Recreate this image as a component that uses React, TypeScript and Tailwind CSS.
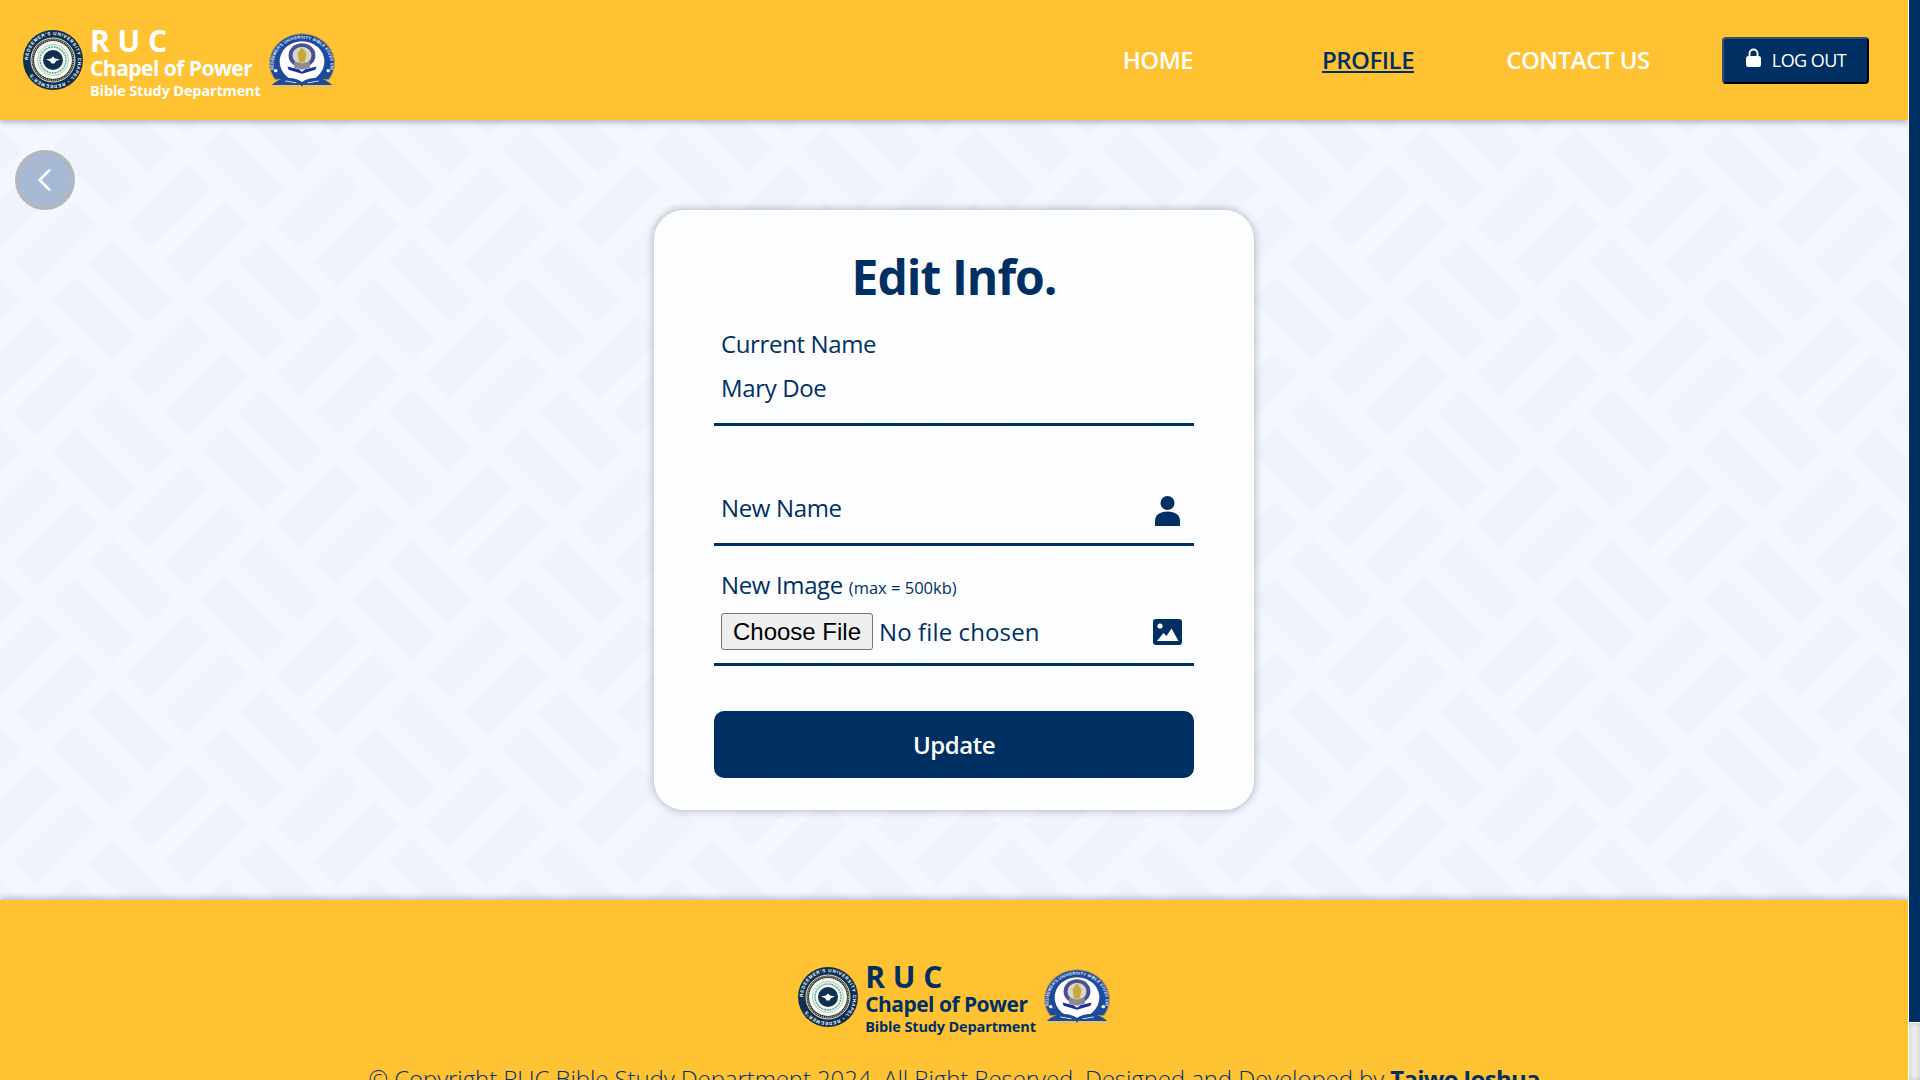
import React from 'react'

function ChapelSeal({ id, className }: { id: string; className: string }) {
    return (
        <svg viewBox="0 0 60 60" className={className}>
            <defs>
                <path id={id} d="M30 30 m-25 0 a25 25 0 1 1 50 0 a25 25 0 1 1 -50 0" />
            </defs>
            <circle cx="30" cy="30" r="30" fill="#11304f" />
            <text fontSize="4.6" fontWeight="700" fill="#fff" fontFamily="'Liberation Sans', sans-serif" letterSpacing="0.7">
                <textPath href={`#${id}`}>REDEEMER'S UNIVERSITY CHAPEL • REDEEMER'S</textPath>
            </text>
            <circle cx="30" cy="30" r="22" fill="none" stroke="#fff" strokeWidth="0.9" />
            <circle cx="30" cy="30" r="20.4" fill="none" stroke="#e8b93a" strokeWidth="1.5" strokeDasharray="1 1" />
            <circle cx="30" cy="30" r="19" fill="#f6f7f2" />
            <circle cx="30" cy="30" r="15.5" fill="none" stroke="#b9c3cb" strokeWidth="1" />
            <circle cx="30" cy="30" r="13" fill="none" stroke="#46b27a" strokeWidth="1.4" strokeDasharray="2 0.8" />
            <circle cx="30" cy="30" r="10" fill="#11304f" />
            <path d="M23 29.5 L28 28.6 L30 26.6 L32 28.6 L37 29.5 L33 31 L31.5 33.4 L28.5 33.4 L27 31 Z" fill="#fff" />
        </svg>
    )
}

function BibleSeal({ id, className }: { id: string; className: string }) {
    return (
        <svg viewBox="3.5 0 59 56" preserveAspectRatio="none" className={className}>
            <defs>
                <path id={id} d="M8 37 A25.5 25.5 0 1 1 58 37" />
            </defs>
            <path d="M9 47 A29 29 0 1 1 57 47 Z" fill="#1d4a9c" stroke="#c99f3a" strokeWidth="1" />
            <text fontSize="3.9" fontWeight="700" fill="#e6ecf7" fontFamily="'Liberation Sans', sans-serif" letterSpacing="0.15">
                <textPath href={`#${id}`}>REDEEMER'S UNIVERSITY BIBLE STUDY UNIT</textPath>
            </text>
            <circle cx="33" cy="29" r="20" fill="#fff" />
            <circle cx="9.5" cy="38" r="1.6" fill="#fff" />
            <circle cx="56.5" cy="38" r="1.6" fill="#fff" />
            <circle cx="33" cy="23" r="12" fill="#4a4f95" />
            <circle cx="33" cy="23" r="8.5" fill="#d8d6c4" />
            <path d="M33 15 L37 21 L35.5 30 L30.5 30 L29 21 Z" fill="#c9a73f" />
            <path d="M26 29 L33 31 L40 29 L40 35 L33 37 L26 35 Z" fill="#8f8a8d" />
            <path d="M20 34 L30 36.5 L33 39 L36 36.5 L46 34 L45 37 L33 41 L21 37 Z" fill="#1d2f9c" />
            <path d="M6 52 C15 43 26 44 33 49 C40 44 51 43 60 52 L34 52 L33 54 L32 52 Z" fill="#1d4a9c" />
            <path d="M4 53.5 L31 53.5 L33 55.5 L35 53.5 L62 53.5 L60 55 L6 55 Z" fill="#d9c27a" />
            <path d="M18 48 L28 50 M48 48 L38 50" stroke="#fff" strokeWidth="0.9" />
        </svg>
    )
}

function Brand({ color, prefix }: { color: string; prefix: string }) {
    return (
        <div className="flex items-center">
            <ChapelSeal id={`${prefix}-chapel`} className="w-[60px] h-[60px] shrink-0" />
            <div className={`flex flex-col ml-[7px] mt-[7px] font-bold font-['Open_Sans',sans-serif] ${color}`}>
                <span className="text-[30px] leading-[28px] tracking-normal whitespace-pre">R U C</span>
                <span className="text-[21px] leading-[26px] tracking-[-0.025em]">Chapel of Power</span>
                <span className="text-[14.5px] leading-[20px] tracking-[-0.01em]">Bible Study Department</span>
            </div>
            <BibleSeal id={`${prefix}-bible`} className="w-[66px] h-[57px] ml-[8px] shrink-0" />
        </div>
    )
}

function WeavePattern() {
    return (
        <svg className="absolute inset-0 w-full h-full">
            <defs>
                <pattern id="weave" width="150" height="150" patternUnits="userSpaceOnUse">
                    <g fill="#eff3fb">
                        <polygon points="51.7,30 75,6.7 135.7,67.7 112.3,90.7" />
                        <polygon points="88.3,-7.7 112.3,-31 172.7,30 149.3,53.3" />
                        <polygon points="88.3,142.3 112.3,119 172.7,180 149.3,203.3" />
                        <polygon points="-61.7,-7.7 -37.7,-31 22.7,30 -0.7,53.3" />
                        <polygon points="-61.7,142.3 -37.7,119 22.7,180 -0.7,203.3" />
                        <polygon points="126,105 186.7,44 210.7,67.7 149.3,128.3" />
                        <polygon points="-24,105 36.7,44 60.7,67.7 -0.7,128.3" />
                        <polygon points="164,142.3 225,81.7 248.3,105 186.7,165.7" />
                        <polygon points="14,142.3 75,81.7 98.3,105 36.7,165.7" />
                        <polygon points="164,-7.7 225,-68.3 248.3,-45 186.7,15.7" />
                        <polygon points="14,-7.7 75,-68.3 98.3,-45 36.7,15.7" />
                    </g>
                </pattern>
            </defs>
            <rect width="100%" height="100%" fill="url(#weave)" />
        </svg>
    )
}

function App() {
    const fieldText = "text-[24px] leading-[32px] tracking-[-0.015em] text-[#003063]"

    return (
        <div className="h-screen overflow-hidden flex font-['Open_Sans',sans-serif] bg-white">
            <div className="flex-1 min-w-0 h-[1141px]">
                <header className="relative z-10 h-[120px] bg-[#ffc233] flex items-center justify-between pl-[23px] pr-[39px] shadow-[0_2px_6px_rgba(0,48,99,0.35)]">
                    <Brand color="text-white" prefix="top" />
                    <nav className="flex items-center">
                        <a className="w-[210px] text-center text-[24px] font-semibold tracking-[-0.02em] text-white">HOME</a>
                        <a className="w-[210px] text-center text-[24px] font-semibold tracking-[-0.02em] text-[#003063] underline">PROFILE</a>
                        <a className="w-[210px] text-center text-[24px] font-semibold tracking-[-0.02em] text-white">CONTACT US</a>
                        <button className="ml-[39px] w-[147px] h-[47px] flex items-center justify-center gap-[10px] bg-[#003063] text-white text-[18px] tracking-[-0.03em] rounded-[4px] border-2 border-t-[#33506f] border-l-[#33506f] border-r-black border-b-black">
                            <svg viewBox="0 0 17 19" className="w-[17px] h-[19px] -mt-[5px]">
                                <path d="M4.5 9 V5.5 A4 4 0 0 1 12.5 5.5 V9" fill="none" stroke="#fff" strokeWidth="1.8" />
                                <rect x="1" y="8" width="15" height="11" rx="2.5" fill="#fff" />
                            </svg>
                            LOG OUT
                        </button>
                    </nav>
                </header>

                <main className="relative h-[780px] bg-[#f3f7ff] flex items-center justify-center">
                    <WeavePattern />
                    <button className="absolute left-[15px] top-[30px] w-[60px] h-[60px] rounded-full bg-[#a8bad3] border-[3px] border-[#b4b6ba] flex items-center justify-center">
                        <svg viewBox="0 0 16 26" className="w-[14px] h-[24px] -ml-[3px]" fill="none" stroke="#fff" strokeWidth="3" strokeLinecap="round" strokeLinejoin="round">
                            <path d="M14 2 L3 13 L14 24" />
                        </svg>
                    </button>

                    <div className="relative w-[600px] h-[600px] rounded-[30px] bg-white/80 shadow-[0_0_10px_rgba(0,0,0,0.3)] px-[60px] pt-[35px]">
                        <h1 className="text-[48px] leading-[64px] font-bold tracking-[-0.02em] text-center text-[#003063]">Edit Info.</h1>

                        <div className="h-[117px] pt-[19px] border-b-[3px] border-[#003063] px-[7px]">
                            <p className={fieldText}>Current Name</p>
                            <p className={`${fieldText} mt-[12px]`}>Mary Doe</p>
                        </div>

                        <div className="h-[120px] border-b-[3px] border-[#003063] pl-[7px] pr-[14px] flex items-end justify-between pb-[19px]">
                            <span className={fieldText}>New Name</span>
                            <svg viewBox="0 0 25 30" className="w-[25px] h-[30px] -mb-[2px]" fill="#003063">
                                <circle cx="12.5" cy="7" r="7" />
                                <path d="M0 30 V25 C0 19 5 15.5 12.5 15.5 C20 15.5 25 19 25 25 V30 Z" />
                            </svg>
                        </div>

                        <div className="h-[120px] border-b-[3px] border-[#003063] pl-[7px] pr-[12px] pt-[23px]">
                            <p className={fieldText}>
                                New Image <span className="text-[16.5px] tracking-normal">(max = 500kb)</span>
                            </p>
                            <div className="flex items-center justify-between mt-[9px]">
                                <div className="flex items-center">
                                    <button className="w-[152px] h-[37px] bg-[#efefef] border border-[#767676] rounded-[3px] text-black text-[24px] font-['Liberation_Sans',sans-serif]">Choose File</button>
                                    <span className="ml-[6px] text-[24px] leading-[32px] tracking-[0.005em] text-[#003063]">No file chosen</span>
                                </div>
                                <svg viewBox="0 0 29 26" className="w-[29px] h-[26px]">
                                    <rect width="29" height="26" rx="3" fill="#003063" />
                                    <circle cx="7" cy="7" r="2.6" fill="#fff" />
                                    <path d="M4 22 L10.5 14 L13.5 17 L18.5 9.5 L25.5 22 Z" fill="#fff" strokeLinejoin="round" />
                                </svg>
                            </div>
                        </div>

                        <button className="w-full h-[67px] mt-[45px] rounded-[10px] bg-[#003063] text-white text-[24px] font-semibold tracking-[-0.02em]">Update</button>
                    </div>
                </main>

                <footer className="relative z-10 h-[241px] bg-[#ffc233] shadow-[0_-2px_6px_rgba(0,48,99,0.3)] pt-[56px] flex flex-col items-center">
                    <Brand color="text-[#003063]" prefix="bottom" />
                    <p className="mt-[26px] text-[24px] leading-[32px] tracking-[-0.004em] font-light text-[#003063] whitespace-nowrap">
                        © Copyright RUC Bible Study Department 2024. All Right Reserved. Designed and Developed by <span className="font-bold tracking-[-0.03em]">Taiwo Joshua</span>
                    </p>
                </footer>
            </div>

            {/* scrollbar is not painted in the shot, so it is drawn here */}
            <aside className="relative z-20 w-[12px] h-screen shrink-0 flex flex-col border-l border-white bg-white">
                <div className="h-[1022px] bg-[#003063]" />
                <div className="flex-1 mt-px bg-[#f1f1f1] shadow-[inset_0_0_6px_rgba(0,0,0,0.2)]" />
            </aside>
        </div>
    )
}

export default App
